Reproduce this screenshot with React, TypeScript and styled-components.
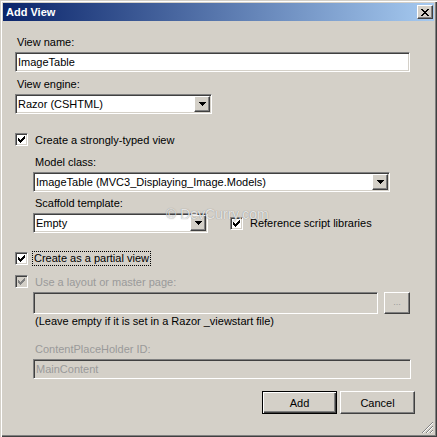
import React from "react";
import styled, { createGlobalStyle, css } from "styled-components";

const Global = createGlobalStyle`
  html, body { margin: 0; padding: 0; background: #D4D0C8; }
  body { font-family: "Liberation Sans", Arial, sans-serif; font-size: 11px; }
  * { box-sizing: border-box; }
`;

const sunken = css`
  border-style: solid;
  border-width: 1px;
  border-color: #808080 #ffffff #ffffff #808080;
  box-shadow: inset 1px 1px 0 #404040, inset -1px -1px 0 #d4d0c8;
`;

const raised = css`
  border-style: solid;
  border-width: 1px;
  border-color: #ffffff #404040 #404040 #ffffff;
  box-shadow: inset -1px -1px 0 #808080, inset 1px 1px 0 #d4d0c8;
  background: #d4d0c8;
`;

const Window = styled.div`
  position: relative;
  width: 437px;
  height: 437px;
  background: #d4d0c8;
  padding: 3px;
  display: flex;
  flex-direction: column;
  color: #000;
  font: 11px "Liberation Sans", Arial, sans-serif;
  box-shadow: inset 1px 1px 0 #d4d0c8, inset 2px 2px 0 #ffffff,
    inset -1px -1px 0 #404040, inset -2px -2px 0 #808080;
`;

const TitleBar = styled.div`
  height: 18px;
  display: flex;
  align-items: center;
  justify-content: space-between;
  padding: 0 1px 0 3px;
  background: linear-gradient(to right, #0a246a, #a6caf0);
  color: #fff;
  font-weight: bold;
  font-size: 11px;
`;

const CloseButton = styled.div`
  ${raised};
  width: 16px;
  height: 14px;
  display: flex;
  align-items: center;
  justify-content: center;
`;

const Body = styled.div`
  display: flex;
  flex-direction: column;
  padding: 0 19px 0 12px;
`;

const Label = styled.div<{ $top: number; $disabled?: boolean; $indent?: boolean }>`
  line-height: 13px;
  height: 13px;
  margin-top: ${(p) => p.$top}px;
  margin-left: ${(p) => (p.$indent ? 20 : 2)}px;
  color: ${(p) => (p.$disabled ? "#9a9a9a" : "#000")};
  white-space: nowrap;
`;

const Field = styled.div<{ $w: number; $h?: number; $top?: number; $indent?: boolean; $disabled?: boolean }>`
  ${sunken};
  width: ${(p) => p.$w}px;
  height: ${(p) => p.$h ?? 20}px;
  margin-top: ${(p) => p.$top ?? 0}px;
  margin-left: ${(p) => (p.$indent ? 18 : 0)}px;
  background: ${(p) => (p.$disabled ? "#d4d0c8" : "#fff")};
  color: ${(p) => (p.$disabled ? "#9a9a9a" : "#000")};
  display: flex;
  align-items: center;
  padding: 0 2px 0 2px;
  flex-shrink: 0;
  white-space: nowrap;
`;

const FieldText = styled.span`
  flex: 1;
  line-height: 13px;
`;

const DropButton = styled.div`
  ${raised};
  width: 16px;
  height: 16px;
  display: flex;
  align-items: center;
  justify-content: center;
  margin-right: -1px;
`;

const CheckRow = styled.div<{ $top: number; $disabled?: boolean }>`
  display: flex;
  align-items: center;
  height: 13px;
  margin-top: ${(p) => p.$top}px;
  color: ${(p) => (p.$disabled ? "#9a9a9a" : "#000")};
  white-space: nowrap;
`;

const Box = styled.div<{ $disabled?: boolean }>`
  ${sunken};
  width: 13px;
  height: 13px;
  background: ${(p) => (p.$disabled ? "#d4d0c8" : "#fff")};
  display: flex;
  align-items: center;
  justify-content: center;
  margin-right: 7px;
  flex-shrink: 0;
`;

const Focus = styled.span`
  outline: 1px dotted #000;
  outline-offset: 0px;
  margin-left: -2px;
  padding: 0 1px;
  line-height: 13px;
`;

const Row = styled.div<{ $top: number; $indent?: boolean; $gap: number }>`
  display: flex;
  align-items: center;
  gap: ${(p) => p.$gap}px;
  margin-top: ${(p) => p.$top}px;
  margin-left: ${(p) => (p.$indent ? 18 : 0)}px;
`;

const SmallButton = styled.div`
  ${raised};
  width: 26px;
  height: 22px;
  display: flex;
  align-items: center;
  justify-content: center;
  color: #9a9a9a;
  font-size: 9px;
  padding-bottom: 2px;
`;

const Buttons = styled.div`
  display: flex;
  justify-content: flex-end;
  gap: 3px;
  margin-top: 12px;
  margin-right: 0;
`;

const PushButton = styled.div<{ $default?: boolean }>`
  width: 75px;
  height: 23px;
  display: flex;
  align-items: center;
  justify-content: center;
  background: #d4d0c8;
  ${(p) =>
    p.$default
      ? css`
          border: 1px solid #000;
          box-shadow: inset 1px 1px 0 #fff, inset -1px -1px 0 #404040,
            inset -2px -2px 0 #808080;
        `
      : raised};
`;

const Watermark = styled.div`
  position: absolute;
  left: 166px;
  top: 206px;
  font: 14px "Liberation Sans", Arial, sans-serif;
  color: rgba(245, 245, 245, 0.85);
  text-shadow: 0 0 1px rgba(90, 90, 90, 0.7);
  pointer-events: none;
  white-space: nowrap;
`;

const Grip = styled.svg`
  position: absolute;
  right: 3px;
  bottom: 3px;
`;

const Arrow = () => (
  <svg width="7" height="4" viewBox="0 0 7 4" shapeRendering="crispEdges">
    <path d="M0 0H7L3.5 4Z" fill="#000" />
  </svg>
);

const Check = ({ color = "#000" }: { color?: string }) => (
  <svg width="7" height="7" viewBox="0 0 7 7" shapeRendering="crispEdges">
    <path
      d="M6 0h1v3h-1v1h-1v1h-1v1h-1v1h-1v-1h-1v-1h-1v-3h1v1h1v1h1v-1h1v-1h1z"
      fill={color}
    />
  </svg>
);

const Select = ({ w, text, top, indent }: { w: number; text: string; top: number; indent?: boolean }) => (
  <Field $w={w} $top={top} $indent={indent}>
    <FieldText>{text}</FieldText>
    <DropButton>
      <Arrow />
    </DropButton>
  </Field>
);

export default function App() {
  return (
    <Window>
      <Global />
      <TitleBar>
        <span>Add View</span>
        <CloseButton>
          <svg width="8" height="7" viewBox="0 0 8 7" shapeRendering="crispEdges">
            <path
              d="M0 0h2v1h1v1h2v-1h1v-1h2v1h-1v1h-1v1h-1v1h1v1h1v1h1v1h-2v-1h-1v-1h-2v1h-1v1h-2v-1h1v-1h1v-1h1v-1h-1v-1h-1v-1h-1z"
              fill="#000"
            />
          </svg>
        </CloseButton>
      </TitleBar>
      <Body>
        <Label $top={15}>View name:</Label>
        <Field $w={395} $top={3}>
          <FieldText>ImageTable</FieldText>
        </Field>
        <Label $top={6}>View engine:</Label>
        <Select w={197} text="Razor (CSHTML)" top={3} />

        <CheckRow $top={19}>
          <Box>
            <Check />
          </Box>
          <span>Create a strongly-typed view</span>
        </CheckRow>
        <Label $top={10} $indent>
          Model class:
        </Label>
        <Select w={357} text="ImageTable (MVC3_Displaying_Image.Models)" top={3} indent />
        <Label $top={5} $indent>
          Scaffold template:
        </Label>
        <Row $top={3} $indent $gap={22}>
          <Select w={175} text="Empty" top={0} />
          <CheckRow $top={0}>
            <Box>
              <Check />
            </Box>
            <span>Reference script libraries</span>
          </CheckRow>
        </Row>

        <CheckRow $top={19}>
          <Box>
            <Check />
          </Box>
          <Focus>Create as a partial view</Focus>
        </CheckRow>
        <CheckRow $top={10} $disabled>
          <Box $disabled>
            <Check color="#808080" />
          </Box>
          <span>Use a layout or master page:</span>
        </CheckRow>
        <Row $top={4} $indent $gap={6}>
          <Field $w={345} $h={22} $disabled />
          <SmallButton>...</SmallButton>
        </Row>
        <Label $top={1} $indent>
          (Leave empty if it is set in a Razor _viewstart file)
        </Label>
        <Label $top={15} $indent $disabled>
          ContentPlaceHolder ID:
        </Label>
        <Field $w={378} $top={3} $indent $disabled>
          <FieldText>MainContent</FieldText>
        </Field>
        <Buttons>
          <PushButton $default>Add</PushButton>
          <PushButton>Cancel</PushButton>
        </Buttons>
      </Body>
      <Watermark>© DevCurry.com</Watermark>
      <Grip width="12" height="12" viewBox="0 0 12 12" shapeRendering="crispEdges">
        <path d="M11 0L0 11M11 4L4 11M11 8L8 11" stroke="#808080" strokeWidth="1" />
        <path d="M11 1L1 11M11 5L5 11M11 9L9 11" stroke="#ffffff" strokeWidth="1" />
      </Grip>
    </Window>
  );
}
